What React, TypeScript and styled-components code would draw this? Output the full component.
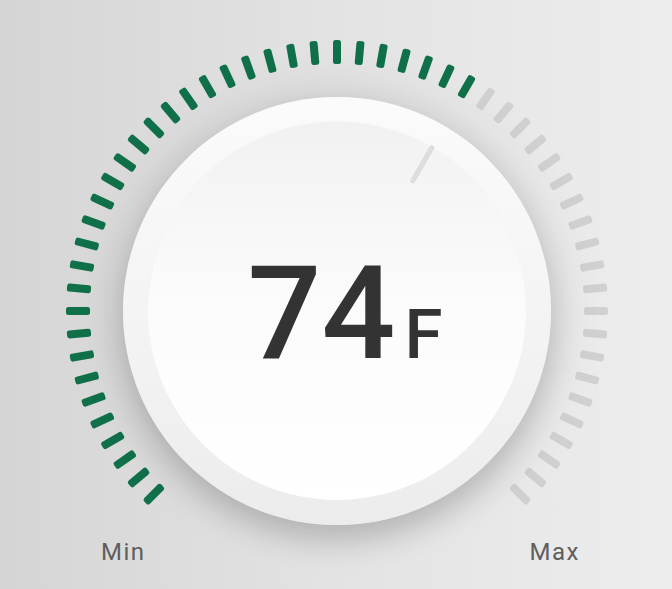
import * as React from 'react';
import styled, { createGlobalStyle } from 'styled-components';

const MIN_ANGLE = -135;
const MAX_ANGLE = 135;
const STEP = 5;
const VALUE_ANGLE = 30;

const DIAL_SIZE = 542;
const TICK_OUTER = 271;
const TICK_LENGTH = 24;
const TICK_WIDTH = 8;

const ticks: number[] = [];
for (let a = MIN_ANGLE; a <= MAX_ANGLE; a += STEP) ticks.push(a);

const App: React.FC = () => {
  return (
    <>
      <GlobalStyle />
      <Stage>
        <Dial>
          <TickRing viewBox={`0 0 ${DIAL_SIZE} ${DIAL_SIZE}`}>
            {ticks.map((angle) => (
              <rect
                key={angle}
                x={DIAL_SIZE / 2 - TICK_WIDTH / 2}
                y={DIAL_SIZE / 2 - TICK_OUTER}
                width={TICK_WIDTH}
                height={TICK_LENGTH}
                rx={2.5}
                fill={angle <= VALUE_ANGLE ? '#10704a' : '#d0d0d0'}
                transform={`rotate(${angle} ${DIAL_SIZE / 2} ${DIAL_SIZE / 2})`}
              />
            ))}
          </TickRing>

          <Knob>
            <Face>
              <Readout>
                <Value>74</Value>
                <Unit>F</Unit>
              </Readout>
            </Face>
            <Pointer angle={VALUE_ANGLE} />
          </Knob>

          <Limits>
            <Limit>Min</Limit>
            <Limit>Max</Limit>
          </Limits>
        </Dial>
      </Stage>
    </>
  );
};

export default App;

const GlobalStyle = createGlobalStyle`
  html, body {
    margin: 0;
    height: 100%;
  }
  body {
    font-family: Roboto, "Liberation Sans", sans-serif;
    background: linear-gradient(to right, #d5d5d5 0%, #e3e3e3 50%, #ededed 100%);
    overflow: hidden;
  }
  #root {
    height: 100%;
  }
`;

const Stage = styled.div`
  display: flex;
  justify-content: center;
  padding: 40px 0 0 2px;
  height: 100%;
  box-sizing: border-box;
`;

const Dial = styled.div`
  display: grid;
  width: ${DIAL_SIZE}px;
  height: ${DIAL_SIZE}px;

  & > * {
    grid-area: 1 / 1;
  }
`;

const TickRing = styled.svg`
  width: 100%;
  height: 100%;
`;

const Knob = styled.div`
  position: relative;
  align-self: center;
  justify-self: center;
  display: grid;
  place-items: center;
  width: 428px;
  height: 428px;
  border-radius: 50%;
  background: linear-gradient(to bottom, #fbfbfb 0%, #f3f3f3 55%, #ececec 100%);
  box-shadow:
    0 14px 30px rgba(0, 0, 0, 0.17),
    0 0 55px rgba(0, 0, 0, 0.1);
`;

const Face = styled.div`
  display: grid;
  place-items: center;
  width: 378px;
  height: 378px;
  border-radius: 50%;
  background: linear-gradient(to bottom, #f1f1f1 0%, #fbfbfb 45%, #ffffff 100%);
  box-shadow: 0 -1px 1px rgba(0, 0, 0, 0.03);
`;

const Readout = styled.div`
  display: flex;
  align-items: baseline;
  gap: 9px;
  margin: 6px 0 0 16px;
  color: #333333;
  line-height: 1;
`;

const Value = styled.span`
  font-size: 130px;
  font-weight: 500;
`;

const Unit = styled.span`
  font-size: 69px;
  font-weight: 500;
`;

const Pointer = styled.div<{ angle: number }>`
  position: absolute;
  left: calc(50% - 2.5px);
  top: calc(50% - 191px);
  width: 5px;
  height: 43px;
  border-radius: 3px;
  background: #dedede;
  box-shadow: inset 0 0 0 1px rgba(0, 0, 0, 0.02);
  transform-origin: 50% 191px;
  transform: rotate(${(p) => p.angle}deg);
`;

const Limits = styled.div`
  align-self: end;
  display: flex;
  justify-content: space-between;
  padding: 0 28px 18px 35px;
`;

const Limit = styled.span`
  font-size: 24px;
  font-weight: 400;
  line-height: 24px;
  letter-spacing: 1.5px;
  color: #5e5e5e;
`;
